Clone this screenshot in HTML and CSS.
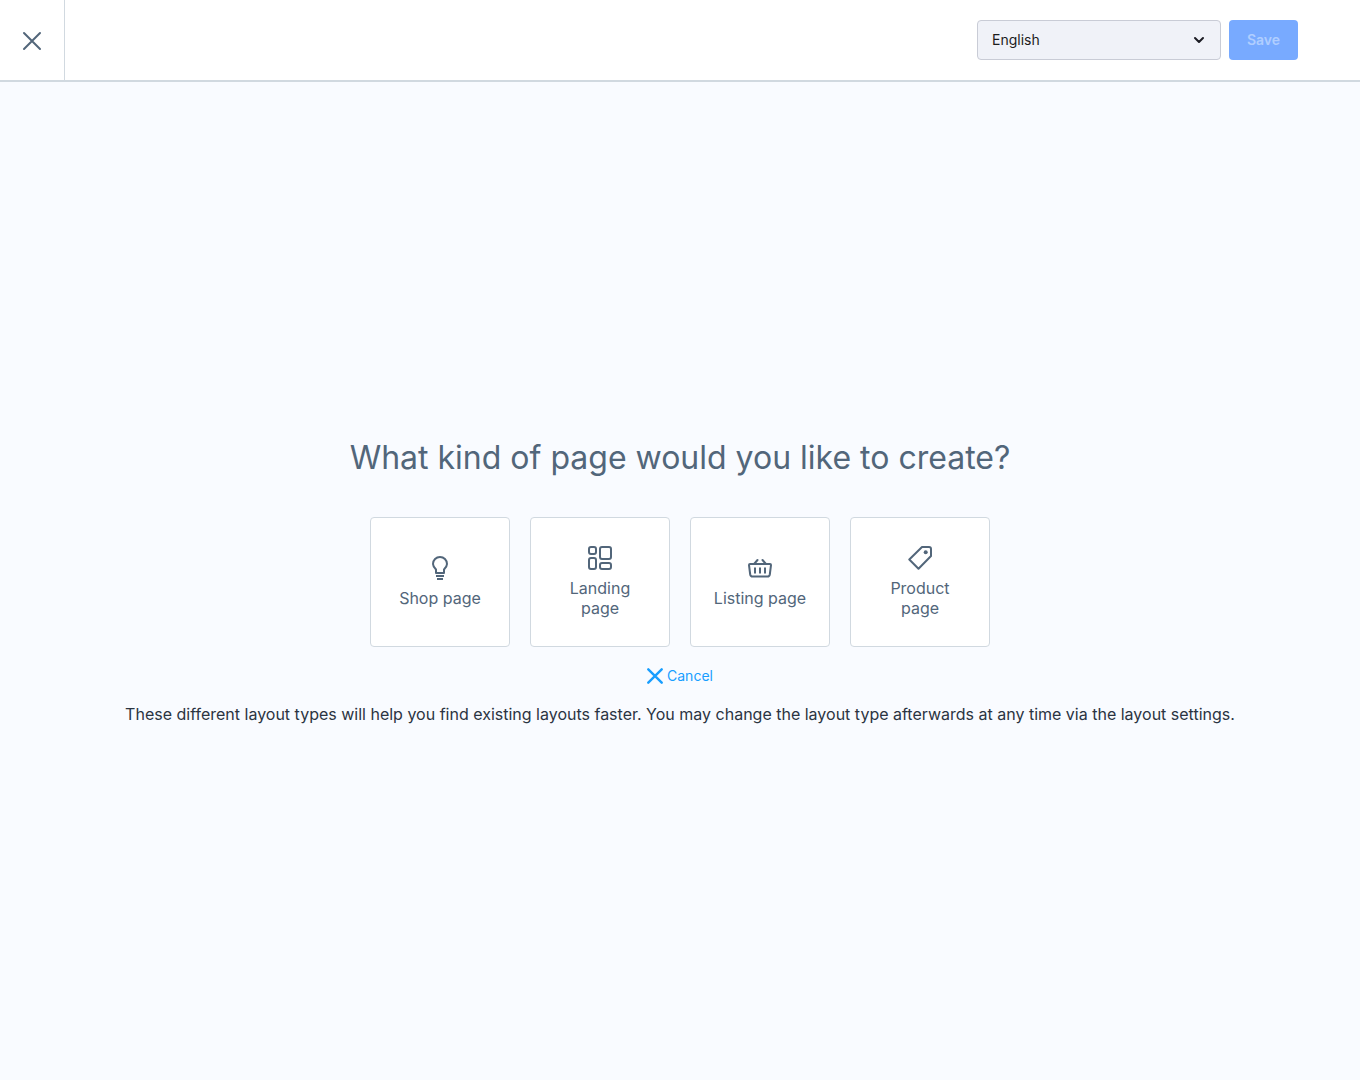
FILE: index.html
```html
<!DOCTYPE html>
<html lang="en">
<head>
<meta charset="utf-8">
<title>Create layout</title>
<link rel="stylesheet" href="styles.css">
</head>
<body>
<header class="topbar">
  <button class="close" type="button" aria-label="Close">
    <svg width="20" height="20" viewBox="0 0 20 20"><path d="M2 2l16 16M18 2L2 18"/></svg>
  </button>
  <div class="actions">
    <div class="language">
      <select class="language-select" aria-label="Language"><option>English</option></select>
      <svg class="chevron" width="12" height="8" viewBox="0 0 12 8"><path d="M2 2l4 4 4-4"/></svg>
    </div>
    <button class="save" type="button" disabled>Save</button>
  </div>
</header>
<main class="wizard">
  <h1 class="title">What kind of page would you like to create?</h1>
  <div class="types">
    <button class="type" type="button">
      <svg width="24" height="24" viewBox="0 0 24 24"><path d="M8 17v-3.500C6.500 12 5 10.500 5 8a7 7 0 0 1 14 0c0 2.500-1.500 4-3 5.500V17z"/><path class="flat" d="M8 20h8M9 23h6"/></svg>
      <span>Shop page</span>
    </button>
    <button class="type" type="button">
      <svg width="24" height="24" viewBox="0 0 24 24"><rect x="1" y="1" width="7" height="7" rx="2"/><rect x="12" y="1" width="11" height="12" rx="2"/><rect x="1" y="12" width="7" height="11" rx="2"/><rect x="12" y="17" width="11" height="6" rx="2"/></svg>
      <span>Landing page</span>
    </button>
    <button class="type" type="button">
      <svg width="24" height="24" viewBox="0 0 24 24"><path d="M2 8h20q1 0 1 1l-1.200 9.500q-.4 2-2.300 2h-15q-1.900 0-2.300-2L1 9q0-1 1-1zM6.500 7.500l3-3.500M17.500 7.500l-3-3.500"/><path class="flat" d="M7 11.500v6M12 11.500v6M17 11.500v6"/></svg>
      <span>Listing page</span>
    </button>
    <button class="type" type="button">
      <svg width="24" height="24" viewBox="0 0 24 24"><path d="M14 1h7q2 0 2 2v7L10.500 22.700 1.300 13.500z"/><circle class="dot" cx="17.700" cy="6.300" r="2"/></svg>
      <span>Product page</span>
    </button>
  </div>
  <button class="cancel" type="button">
    <svg width="16" height="16" viewBox="0 0 16 16"><path stroke-width="2.400" d="M1.300 1.300l13.400 13.400M14.700 1.300L1.300 14.700"/></svg>
    <span>Cancel</span>
  </button>
  <p class="hint">These different layout types will help you find existing layouts faster. You may change the layout type afterwards at any time via the layout settings.</p>
</main>
</body>
</html>
```
FILE: styles.css
```css
* { box-sizing: border-box; }
body {
  margin: 0;
  min-height: 100vh;
  display: flex;
  flex-direction: column;
  background: #f9fbff;
  color: #2b3442;
  font-family: Inter, "Liberation Sans", sans-serif;
  font-size: 16px;
}
button, select { font: inherit; }
svg { fill: none; stroke: currentColor; stroke-width: 2; stroke-linecap: round; stroke-linejoin: round; flex-shrink: 0; }
.flat { stroke-linecap: butt; }
.dot { fill: currentColor; stroke: none; }
.topbar {
  height: 82px;
  display: flex;
  justify-content: space-between;
  background: #fff;
  border-bottom: 2px solid #d1d9e0;
}
.close {
  width: 65px;
  display: flex;
  align-items: center;
  justify-content: center;
  padding: 2px 0 0;
  border: 0;
  border-right: 1px solid #d1d9e0;
  background: none;
  color: #52667a;
}
.actions { display: flex; align-items: center; gap: 8px; padding-right: 62px; }
.language { position: relative; width: 244px; }
.language-select {
  appearance: none;
  width: 100%;
  height: 40px;
  padding: 0 14px 2px;
  border: 1px solid #c9ccd6;
  border-radius: 4px;
  background: #f0f2f8;
  color: #1c1c1c;
  font-size: 14px;
}
.chevron { position: absolute; right: 16px; top: 16px; pointer-events: none; color: #1c1c24; }
.save {
  min-width: 69px;
  height: 40px;
  padding: 0 16px 2px;
  border: 0;
  border-radius: 4px;
  background: #78aaff;
  color: #b0ceff;
  font-size: 14px;
  font-weight: 600;
}
.wizard {
  flex: 1;
  display: flex;
  flex-direction: column;
  align-items: center;
  justify-content: center;
}
.title { margin: 0 0 38px; font-size: 32px; font-weight: 400; line-height: 42px; color: #52667a; }
.types { display: flex; gap: 20px; margin-bottom: 20px; }
.type {
  width: 140px;
  height: 130px;
  display: flex;
  flex-direction: column;
  align-items: center;
  justify-content: center;
  gap: 8px;
  padding: 0 20px;
  border: 1px solid #d1d9e0;
  border-radius: 4px;
  background: #fff;
  color: #52667a;
  line-height: 20px;
}
.cancel {
  display: flex;
  align-items: center;
  gap: 4px;
  padding: 0;
  border: 0;
  background: none;
  color: #189eff;
  font-size: 14px;
  line-height: 18px;
}
.hint { margin: 18px 0 0; line-height: 22px; text-align: center; }
```
